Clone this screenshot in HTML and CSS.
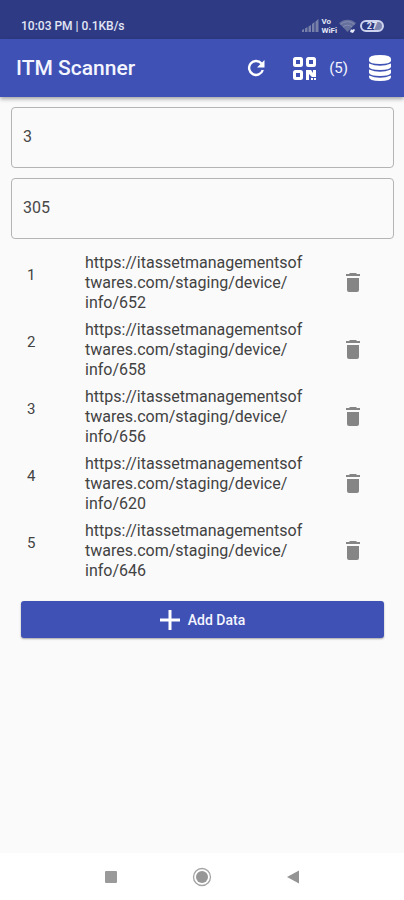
FILE: index.html
```html
<!DOCTYPE html>
<html lang="en">
<head>
<meta charset="utf-8">
<meta name="viewport" content="width=device-width, initial-scale=1">
<title>ITM Scanner</title>
<link rel="stylesheet" href="styles.css">
</head>
<body>
<svg class="sprite" aria-hidden="true">
  <symbol id="trash" viewBox="0 0 14 20"><path d="M4 0h6l1 1h3v2H0V1h3zM1 5h12v12a2 2 0 0 1-2 2H3a2 2 0 0 1-2-2z"/></symbol>
</svg>
<div class="status">
  <span>10:03 PM | 0.1KB/s</span>
  <div class="status-icons">
    <svg width="17" height="13" viewBox="0 0 17 13" fill="#7680a8"><path d="M0 13v-2l2-1v3zM3 13V9.500l2.500-1.500v5zM6.500 13V7.500L9 6v7zM10 13V5l2.500-2v10zM13.500 13V2.500L16.500 0v13z"/></svg>
    <span class="vowifi"><span>Vo</span><span>WiFi</span></span>
    <svg width="17" height="14" viewBox="0 0 17 14"><path d="M0 4a12.500 12.500 0 0 1 17 0L8.500 13z" fill="#66709c"/><path d="M1.500 5.500a10 10 0 0 1 14 0M4 8a6.500 6.500 0 0 1 9 0" fill="none" stroke="#838cb3"/><path d="M11 13l1-3 1 1 2-1 1 1-2 3z" fill="#e6e9f7"/></svg>
    <span class="battery">27</span>
  </div>
</div>
<header class="appbar">
  <h1>ITM Scanner</h1>
  <button class="refresh" aria-label="Refresh">
    <svg width="18" height="18" viewBox="0 0 18 18"><path d="M14.500 4.500A7 7 0 1 0 15.800 11" fill="none" stroke="#fff" stroke-width="2.400"/><path d="M17.500 1v7.500H10z" fill="#fff"/></svg>
  </button>
  <button class="scan">
    <svg width="23" height="23" viewBox="0 0 23 23" role="img" aria-label="Scanned codes"><g fill="none" stroke="#fff" stroke-width="3"><rect x="1.500" y="1.500" width="7" height="7" rx="1"/><rect x="14.500" y="1.500" width="7" height="7" rx="1"/><rect x="1.500" y="14.500" width="7" height="7" rx="1"/></g><path d="M13 13h5l2 3v-3h3v7h-4l-3-3v6h-3zM18 21h2v2h-2zM21 21h2v2h-2z" fill="#fff"/></svg>
    <span>(5)</span>
  </button>
  <button class="database" aria-label="Database">
    <svg width="24" height="26" viewBox="0 0 24 26" fill="#fff"><path d="M1 4Q1 0 12 0t11 4v2q-1 3-11 3T1 6z"/><path d="M1 8.500q11 4.500 22 0V12q-1 3-11 3T1 12z"/><path d="M1 14.500q11 4.500 22 0V18q-1 3-11 3T1 18z"/><path d="M1 20.500q11 4.500 22 0V22q0 4-11 4T1 22z"/></svg>
  </button>
</header>
<main>
  <form class="form">
    <input type="text" value="3" aria-label="Floor">
    <input type="text" value="305" aria-label="Room">
  </form>
  <table>
    <tbody>
      <tr><td class="num">1</td><td class="url">https://itassetmanagementsof<br>twares.com/staging/device/<br>info/652</td><td class="del"><button aria-label="Delete 1"><svg width="14" height="20"><use href="#trash"/></svg></button></td></tr>
      <tr><td class="num">2</td><td class="url">https://itassetmanagementsof<br>twares.com/staging/device/<br>info/658</td><td class="del"><button aria-label="Delete 2"><svg width="14" height="20"><use href="#trash"/></svg></button></td></tr>
      <tr><td class="num">3</td><td class="url">https://itassetmanagementsof<br>twares.com/staging/device/<br>info/656</td><td class="del"><button aria-label="Delete 3"><svg width="14" height="20"><use href="#trash"/></svg></button></td></tr>
      <tr><td class="num">4</td><td class="url">https://itassetmanagementsof<br>twares.com/staging/device/<br>info/620</td><td class="del"><button aria-label="Delete 4"><svg width="14" height="20"><use href="#trash"/></svg></button></td></tr>
      <tr><td class="num">5</td><td class="url">https://itassetmanagementsof<br>twares.com/staging/device/<br>info/646</td><td class="del"><button aria-label="Delete 5"><svg width="14" height="20"><use href="#trash"/></svg></button></td></tr>
    </tbody>
  </table>
  <button class="add">
    <svg width="20" height="20" viewBox="0 0 20 20"><path d="M10 0v20M0 10h20" stroke="#fff" stroke-width="3"/></svg>
    Add Data
  </button>
</main>
<nav class="nav" aria-label="System">
  <button aria-label="Recent apps"><svg width="20" height="20" viewBox="0 0 20 20"><rect x="4" y="4" width="12" height="12" rx="1" fill="#9a9a9a"/></svg></button>
  <button aria-label="Home"><svg width="20" height="20" viewBox="0 0 20 20"><circle cx="10" cy="10" r="8.500" fill="none" stroke="#a4a4a4" stroke-width="1.300"/><circle cx="10" cy="10" r="6" fill="#979797"/></svg></button>
  <button aria-label="Back"><svg width="20" height="20" viewBox="0 0 20 20"><path d="M16 3.500v13L4 10z" fill="#949494"/></svg></button>
</nav>
</body>
</html>
```
FILE: styles.css
```css
* {
  box-sizing: border-box;
}

body {
  margin: 0;
  min-height: 100vh;
  display: flex;
  flex-direction: column;
  background: #fafafa;
  color: #424242;
  font-family: Roboto, sans-serif;
  font-size: 16px;
}

button {
  margin: 0;
  padding: 0;
  border: 0;
  background: none;
  color: inherit;
  font: inherit;
  display: flex;
  align-items: center;
  justify-content: center;
}

.sprite {
  position: absolute;
  width: 0;
  height: 0;
}

.status {
  height: 39px;
  padding: 12px 20px 0 21px;
  display: flex;
  align-items: center;
  justify-content: space-between;
  background: #2e3b84;
  color: #e3e6f5;
  font-size: 12px;
  font-weight: 500;
}

.status-icons {
  display: flex;
  align-items: center;
  gap: 2px;
}

.vowifi {
  display: flex;
  flex-direction: column;
  font-size: 8px;
  line-height: 9px;
  font-weight: 700;
}

.battery {
  width: 24px;
  height: 12px;
  margin-left: 2px;
  border: 2px solid #cdd2ee;
  border-radius: 6px;
  background: linear-gradient(90deg, #2e3b84 60%, #7c86b0 60%);
  font-size: 9px;
  line-height: 8px;
  font-weight: 700;
  text-align: center;
}

.appbar {
  height: 58px;
  padding: 0 12px 0 16px;
  display: flex;
  align-items: center;
  background: #3f51b5;
  color: #f4f5ff;
  box-shadow: 0 2px 4px rgba(0, 0, 0, 0.35);
}

.appbar h1 {
  flex: 1;
  margin: 0;
  font-size: 21px;
  font-weight: 500;
}

.scan {
  gap: 13px;
  margin: 0 20px 0 28px;
  font-size: 15px;
}

main {
  flex: 1;
  padding: 10px 10px 0 11px;
}

.form {
  display: flex;
  flex-direction: column;
  gap: 10px;
}

.form input {
  width: 100%;
  height: 61px;
  padding: 0 11px 2px;
  border: 1px solid #b4b4b4;
  border-radius: 4px;
  background: transparent;
  color: #484848;
  font: inherit;
}

table {
  width: 100%;
  margin-top: 14px;
  border-collapse: collapse;
  table-layout: fixed;
}

td {
  padding: 0 0 7px;
  line-height: 20px;
}

.num {
  width: 74px;
  padding: 12px 0 0 16px;
  font-size: 15px;
  vertical-align: top;
}

.url {
  white-space: nowrap;
}

.del {
  width: 82px;
}

.del button {
  width: 82px;
  fill: #858585;
}

.add {
  width: calc(100% - 20px);
  height: 37px;
  margin: 13px 10px 0;
  gap: 8px;
  border-radius: 3px;
  background: #3f51b5;
  color: #f4f5ff;
  font-size: 14px;
  font-weight: 500;
  box-shadow: 0 1px 2px rgba(0, 0, 0, 0.35);
}

.nav {
  height: 47px;
  padding: 0 101px;
  display: flex;
  align-items: center;
  justify-content: space-between;
  background: #fff;
}
```
